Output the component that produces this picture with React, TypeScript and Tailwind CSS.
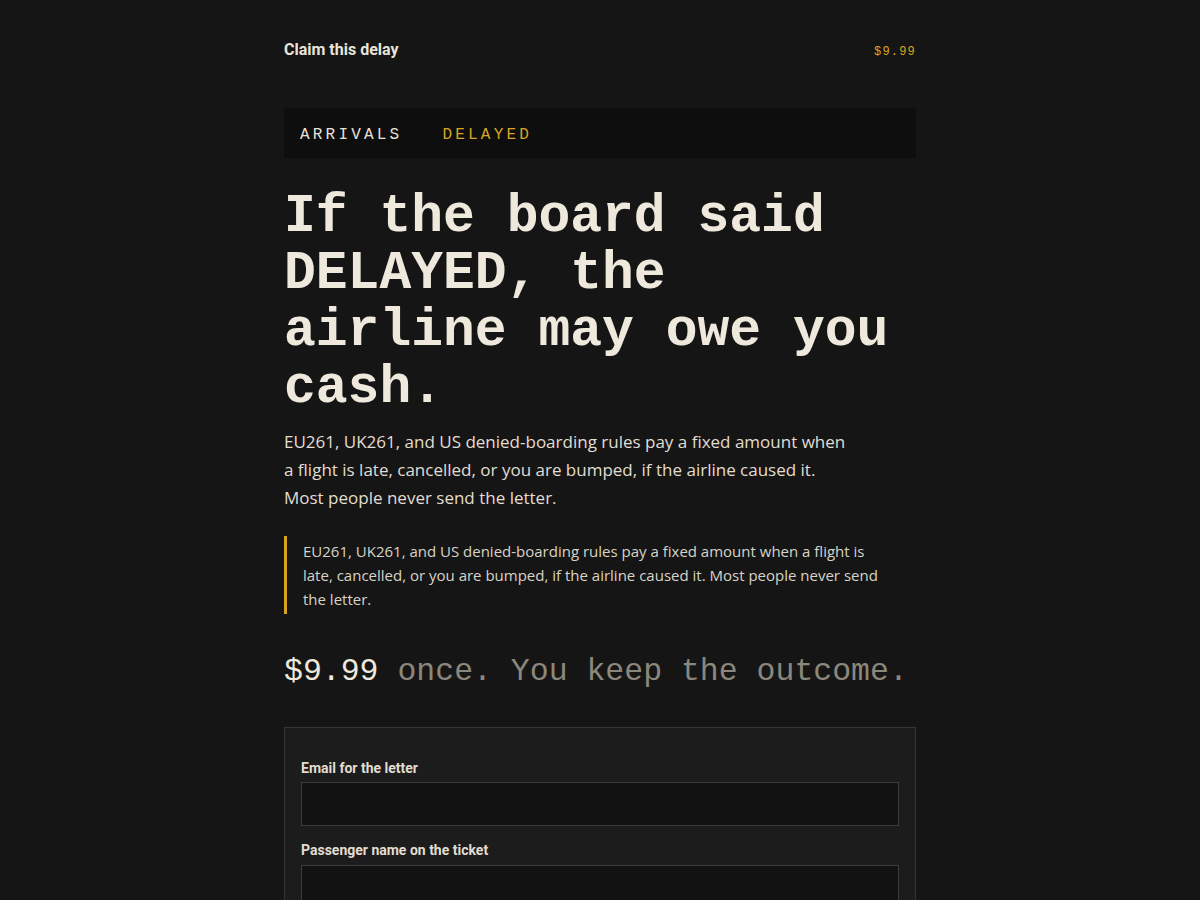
import { useState } from 'react';

const MONO = "font-['Liberation_Mono','DejaVu_Sans_Mono',monospace]";
const SANS = "font-['Roboto','Noto_Sans',sans-serif]";
const BODY = "font-['Open_Sans','Noto_Sans',sans-serif]";

export default function App() {
  const [email, setEmail] = useState('');
  const [name, setName] = useState('');

  return (
    <div className={`min-h-screen bg-[#151515] text-[#ece7da] ${SANS}`}>
      <div className="mx-auto w-[632px]">
        {/* 顶部 */}
        <header className="flex items-baseline justify-between pt-[38px] h-[58px]">
          <span className="text-base font-bold text-[#e8e4da]">Claim this delay</span>
          <span className={`${MONO} text-xs tracking-[0.1em] text-[#d9a521]`}>$9.99</span>
        </header>

        {/* 航班板 */}
        <div className={`mt-[50px] flex h-[50px] items-center gap-10 bg-[#0e0e0e] px-4 pt-1 ${MONO} text-base tracking-[0.2em]`}>
          <span className="text-[#e5e1d6]">ARRIVALS</span>
          <span className="text-[#d9a521]">DELAYED</span>
        </div>

        <h1 className={`mt-[31px] ${MONO} text-[53px] font-bold leading-[57px] text-[#eee9dc]`}>
          If the board said DELAYED, the airline may owe you cash.
        </h1>

        <p className={`mt-[11px] max-w-[570px] ${BODY} text-[17px] leading-[28px] text-[#e2ddd1]`}>
          EU261, UK261, and US denied-boarding rules pay a fixed amount when a flight is late, cancelled, or you are bumped, if the airline caused it. Most people never send the letter.
        </p>

        <blockquote className={`mt-[24px] max-w-[604px] border-l-[3px] border-[#d9a521] py-[3px] pl-4 ${BODY} text-[15px] leading-6 text-[#d8d3c7]`}>
          EU261, UK261, and US denied-boarding rules pay a fixed amount when a flight is late, cancelled, or you are bumped, if the airline caused it. Most people never send the letter.
        </blockquote>

        <div className={`mt-[34px] whitespace-nowrap ${MONO} text-[31.5px] leading-[48px]`}>
          <span className="text-[#eee9dc]">$9.99</span>{' '}
          <span className="text-[#8b877c]">once. You keep the outcome.</span>
        </div>

        {/* 表单 */}
        <form className="mt-[31px] border border-[#353535] bg-[#1c1c1c] px-4 pt-[30px] pb-8">
          <label className="block">
            <span className="mb-1 block text-sm font-bold leading-5 text-[#e2ddd1]">Email for the letter</span>
            <input
              type="email"
              value={email}
              onChange={(e) => setEmail(e.target.value)}
              className="block h-11 w-full border border-[#3c3c3c] bg-[#121212] px-3 text-[#eee9dc] outline-none"
            />
          </label>
          <label className="mt-[14px] block">
            <span className="mb-[5px] block text-sm font-bold leading-5 text-[#e2ddd1]">Passenger name on the ticket</span>
            <input
              type="text"
              value={name}
              onChange={(e) => setName(e.target.value)}
              className="block h-11 w-full border border-[#3c3c3c] bg-[#121212] px-3 text-[#eee9dc] outline-none"
            />
          </label>
        </form>
      </div>
    </div>
  );
}
